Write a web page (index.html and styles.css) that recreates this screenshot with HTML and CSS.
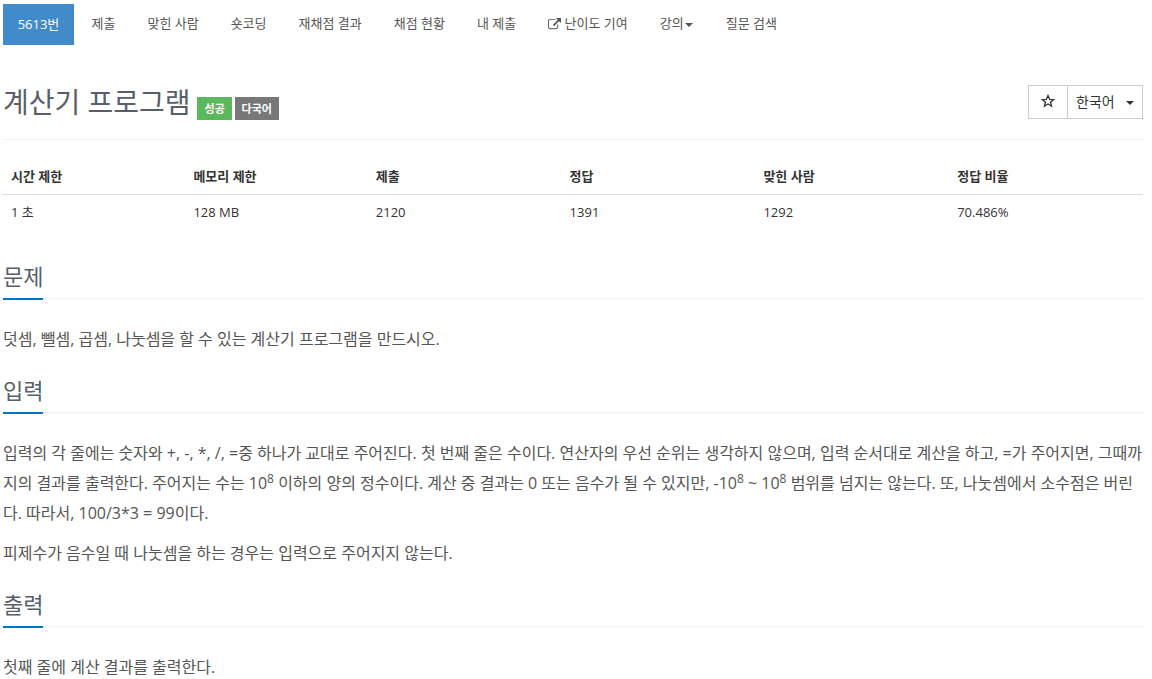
FILE: index.html
```html
<!DOCTYPE html>
<html lang="ko">
<head>
  <meta charset="UTF-8">
  <meta name="viewport" content="width=device-width, initial-scale=1.0">
  <title>5613번: 계산기 프로그램</title>
  <link rel="stylesheet" href="styles.css">
</head>
<body>
  <div class="container">
    <ul class="problem-menu">
      <li class="active"><a href="#">5613번</a></li>
      <li><a href="#">제출</a></li>
      <li><a href="#">맞힌 사람</a></li>
      <li><a href="#">숏코딩</a></li>
      <li><a href="#">재채점 결과</a></li>
      <li><a href="#">채점 현황</a></li>
      <li><a href="#">내 제출</a></li>
      <li><a href="#"><svg class="icon-link" viewBox="0 0 1792 1792"><path d="M1408 928v320q0 119-84.500 203.500t-203.500 84.500h-832q-119 0-203.500-84.500t-84.500-203.500v-832q0-119 84.500-203.500t203.500-84.500h704q14 0 23 9t9 23v64q0 14-9 23t-23 9h-704q-66 0-113 47t-47 113v832q0 66 47 113t113 47h832q66 0 113-47t47-113v-320q0-14 9-23t23-9h64q14 0 23 9t9 23zM1792 64v512q0 26-19 45t-45 19-45-19l-176-176-652 652q-10 10-23 10t-23-10l-114-114q-10-10-10-23t10-23l652-652-176-176q-19-19-19-45t19-45 45-19h512q26 0 45 19t19 45z"/></svg> 난이도 기여</a></li>
      <li><a href="#">강의<span class="caret"></span></a></li>
      <li><a href="#">질문 검색</a></li>
    </ul>

    <div class="page-header">
      <div class="title">
        <h1>계산기 프로그램</h1>
        <span class="label label-success">성공</span>
        <span class="label label-lang">다국어</span>
      </div>
      <div class="btn-group">
        <button class="btn btn-star" type="button"><svg class="icon-star" viewBox="0 0 14 14"><path d="M7 1.500L8.600 5.300L12.700 5.600L9.600 8.200L10.600 12.200L7 10L3.400 12.200L4.400 8.200L1.300 5.600L5.400 5.300Z"/></svg></button>
        <button class="btn btn-lang" type="button">한국어 <span class="caret"></span></button>
      </div>
    </div>

    <table class="problem-info">
      <thead>
        <tr>
          <th class="narrow">시간 제한</th>
          <th class="narrow">메모리 제한</th>
          <th>제출</th>
          <th>정답</th>
          <th>맞힌 사람</th>
          <th>정답 비율</th>
        </tr>
      </thead>
      <tbody>
        <tr>
          <td>1 초</td>
          <td>128 MB</td>
          <td>2120</td>
          <td>1391</td>
          <td>1292</td>
          <td>70.486%</td>
        </tr>
      </tbody>
    </table>

    <section class="problem-section">
      <div class="headline"><h2>문제</h2></div>
      <p>덧셈, 뺄셈, 곱셈, 나눗셈을 할 수 있는 계산기 프로그램을 만드시오.</p>
    </section>

    <section class="problem-section">
      <div class="headline"><h2>입력</h2></div>
      <p>입력의 각 줄에는 숫자와 +, -, *, /, =중 하나가 교대로 주어진다. 첫 번째 줄은 수이다. 연산자의 우선 순위는 생각하지 않으며, 입력 순서대로 계산을 하고, =가 주어지면, 그때까지의 결과를 출력한다. 주어지는 수는 10<sup>8</sup> 이하의 양의 정수이다. 계산 중 결과는 0 또는 음수가 될 수 있지만, -10<sup>8</sup> ~ 10<sup>8</sup> 범위를 넘지는 않는다. 또, 나눗셈에서 소수점은 버린다. 따라서, 100/3*3 = 99이다.</p>
      <p>피제수가 음수일 때 나눗셈을 하는 경우는 입력으로 주어지지 않는다.</p>
    </section>

    <section class="problem-section">
      <div class="headline"><h2>출력</h2></div>
      <p>첫째 줄에 계산 결과를 출력한다.</p>
    </section>
  </div>
</body>
</html>
```
FILE: styles.css
```css
* {
  box-sizing: border-box;
}

body {
  margin: 0;
  color: #333;
  font-family: "Open Sans", "Noto Sans CJK KR", sans-serif;
  font-size: 13px;
  line-height: 20px;
}

.container {
  width: 1141px;
  margin-left: 3px;
  padding-top: 4px;
}

.problem-menu {
  display: flex;
  gap: 2px;
  margin: 0;
  padding: 0;
  list-style: none;
}

.problem-menu a {
  display: block;
  height: 41px;
  padding: 9px 15px;
  color: #555;
  font-size: 13px;
  text-decoration: none;
  white-space: nowrap;
}

.problem-menu .active a {
  width: 71px;
  padding: 10px 0;
  background-color: #428bca;
  color: #fff;
  text-align: center;
}

.icon-link {
  width: 13px;
  height: 13px;
  fill: #555;
  vertical-align: -3px;
}

.caret {
  display: inline-block;
  border-top: 4px solid;
  border-right: 4px solid transparent;
  border-left: 4px solid transparent;
  vertical-align: middle;
}

.problem-menu .active {
  margin-right: 0.5px;
}

.problem-menu .caret {
  margin-left: 1px;
  margin-right: 1px;
}

.page-header {
  display: flex;
  justify-content: space-between;
  width: 1140px;
  height: 95px;
  padding-top: 40px;
  border-bottom: 1px solid #eee;
}

.title {
  display: flex;
  align-items: flex-start;
}

.title h1 {
  margin: 0 6px 0 0;
  color: #585f69;
  font-size: 28px;
  font-weight: 400;
  line-height: 35px;
}

.label {
  height: 23px;
  margin: 12px 3px 0 0;
  padding: 1px 6px 0 7px;
  color: #fff;
  font-size: 11px;
  font-weight: 700;
  line-height: 22px;
}

.label-success {
  width: 35px;
  padding-left: 8px;
  background-color: #5cb85c;
}

.label-lang {
  width: 44px;
  background-color: #777;
}

.btn-group {
  display: flex;
}

.btn {
  height: 34px;
  border: 1px solid #ccc;
  background-color: #fff;
  color: #333;
  font-family: inherit;
  font-size: 14px;
}

.btn-star {
  width: 40px;
  padding: 0 1px 5px 0;
}

.btn-lang {
  display: flex;
  align-items: center;
  justify-content: space-between;
  width: 76px;
  margin-left: -1px;
  padding: 0 8px 2px;
}

.btn-lang .caret {
  margin-top: 3px;
}

.icon-star {
  width: 14px;
  height: 14px;
  fill: none;
  stroke: #333;
  stroke-width: 1.3;
  vertical-align: middle;
}

.problem-info {
  width: 1140px;
  margin-top: 19px;
  border-collapse: collapse;
  table-layout: fixed;
}

.problem-info th,
.problem-info td {
  height: 35px;
  padding: 8px;
  font-size: 13px;
  line-height: 18px;
  text-align: left;
}

.problem-info th {
  border-bottom: 1px solid #ddd;
}

.problem-info .narrow {
  width: 16%;
}

.headline {
  display: flex;
  height: 39px;
  margin-bottom: 25px;
  border-bottom: 1px dotted #e4e9f0;
}

.headline h2 {
  height: 40px;
  margin: 0;
  border-bottom: 2px solid #0076c0;
  color: #585f69;
  font-size: 22px;
  font-weight: 400;
  line-height: 33px;
}

.problem-section {
  margin-top: 20px;
}

.problem-info + .problem-section {
  margin-top: 31px;
}

.problem-section p {
  margin: 0 0 10px;
  color: #555;
  font-size: 16px;
  line-height: 30px;
}

.problem-section p:last-child {
  margin-bottom: 0;
}

.problem-section sup {
  position: relative;
  top: -0.5em;
  font-size: 75%;
  line-height: 0;
  vertical-align: baseline;
}
```
